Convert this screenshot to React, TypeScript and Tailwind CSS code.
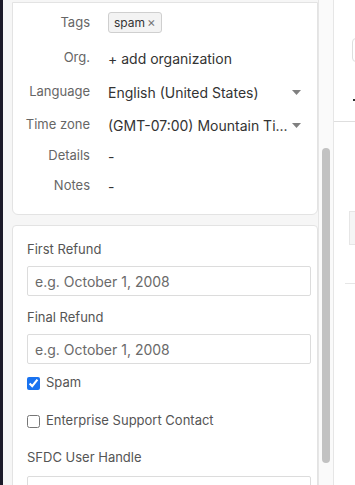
const font = { fontFamily: "Inter, 'Noto Sans', sans-serif" };

const Caret = () => (
  <svg width="9" height="5" viewBox="0 0 9 5" className="shrink-0">
    <path d="M0 0h9L4.5 5z" fill="#808080" />
  </svg>
);

const InfoRow = ({ label, height, children }: { label: string; height: string; children: React.ReactNode }) => (
  <div className={`flex items-center ${height}`}>
    <div className="w-[77px] shrink-0 text-right text-[13px] text-[#666]">{label}</div>
    <div className="ml-[18px] flex min-w-0 flex-1 items-center pr-[16px] text-[14px] text-[#333]">{children}</div>
  </div>
);

const Field = ({ label }: { label: string }) => (
  <div className="flex flex-col">
    <div className="flex h-[26px] items-center text-[13px] text-[#555]">{label}</div>
    <input
      placeholder="e.g. October 1, 2008"
      className="mt-[3px] h-[30px] w-[284px] rounded-[2px] border border-[#dcdcdc] px-[7px] text-[14px] text-[#333] placeholder:text-[#6a6a6a] outline-none"
      style={font}
    />
  </div>
);

const Check = ({ label, checked }: { label: string; checked?: boolean }) => (
  <label className="flex h-[38px] items-center gap-[6px] text-[13px] text-[#555]">
    <input type="checkbox" defaultChecked={checked} className="m-0 h-[13px] w-[13px] accent-[#1a73f0]" />
    {label}
  </label>
);

export default function App() {
  return (
    <div className="flex h-[485px] w-[355px] overflow-hidden bg-white" style={font}>
      <div className="w-[3px] shrink-0 bg-[#1b1a29]" />
      <div className="flex min-w-0 flex-1 flex-col bg-[#f6f6f6] pl-[9px] pt-[2px]">
        <div className="rounded-b-[6px] border border-[#e3e3e3] bg-white pb-[12px] pt-[2px]">
          <InfoRow label="Tags" height="h-[35px]">
            <span className="flex h-[21px] items-center gap-[2px] rounded-[3px] border border-[#cfcfcf] bg-[#f3f3f3] px-[5px] text-[12px] text-[#333]">
              spam <span className="text-[13px] text-[#777]">×</span>
            </span>
          </InfoRow>
          <InfoRow label="Org." height="h-[36px]">+ add organization</InfoRow>
          <InfoRow label="Language" height="h-[32px]">
            <span className="flex-1">English (United States)</span>
            <Caret />
          </InfoRow>
          <InfoRow label="Time zone" height="h-[34px]">
            <span className="flex-1 truncate whitespace-nowrap">(GMT-07:00) Mountain Ti...</span>
            <Caret />
          </InfoRow>
          <InfoRow label="Details" height="h-[28px]">-</InfoRow>
          <InfoRow label="Notes" height="h-[32px]">-</InfoRow>
        </div>
        <div className="mt-[10px] flex-1 rounded-t-[4px] border border-[#e3e3e3] bg-white pl-[14px] pt-[11px]">
          <Field label="First Refund" />
          <div className="h-[9px]" />
          <Field label="Final Refund" />
          <Check label="Spam" checked />
          <Check label="Enterprise Support Contact" />
          <div className="flex h-[36px] items-center text-[13px] text-[#555]">SFDC User Handle</div>
          <div className="h-[30px] w-[284px] rounded-[2px] border border-[#dcdcdc]" />
        </div>
      </div>
      <div className="w-[16px] shrink-0 border-x border-[#e6e6e6] bg-[#fafafa] pl-[3px] pt-[148px]">
        <div className="h-[315px] w-[8px] rounded-full bg-[#c2c2c2]" />
      </div>
      <div className="flex w-[21px] shrink-0 flex-col bg-white">
        <div className="ml-[18px] mt-[38px] h-[24px] w-[10px] rounded-l-[4px] border border-[#dedede]" />
        <div className="ml-[19px] mt-[37px] h-[2px] w-[2px] bg-[#333]" />
        <div className="mt-[20px] h-px w-full bg-[#dedede]" />
        <div className="ml-[15px] mt-[89px] h-[34px] w-[10px] border border-[#e6e6e6] bg-[#f5f5f5]" />
        <div className="ml-[11px] mt-[38px] h-px w-[10px] bg-[#e6e6e6]" />
      </div>
    </div>
  );
}
